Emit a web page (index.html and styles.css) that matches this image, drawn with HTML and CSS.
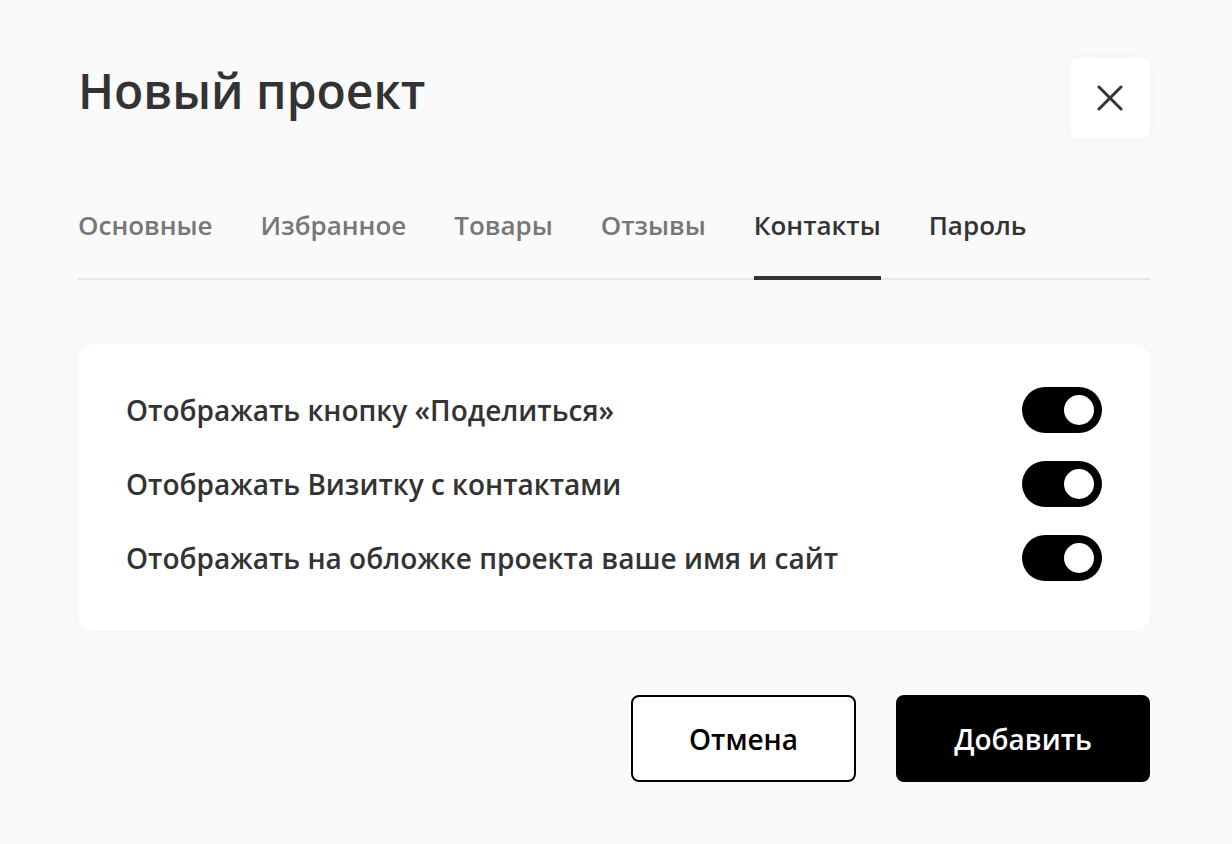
FILE: index.html
```html
<!DOCTYPE html>
<html lang="ru">
<head>
<meta charset="utf-8">
<title>Новый проект</title>
<link rel="stylesheet" href="styles.css">
</head>
<body>
<div class="modal">
  <header class="head">
    <h1 class="title">Новый проект</h1>
    <button class="close" aria-label="Закрыть">
      <svg width="26" height="26" viewBox="0 0 26 26"><path d="M2 2L24 24M24 2L2 24" stroke="#333" stroke-width="3" stroke-linecap="round"/></svg>
    </button>
  </header>
  <nav class="tabs">
    <span class="tab">Основные</span>
    <span class="tab">Избранное</span>
    <span class="tab">Товары</span>
    <span class="tab">Отзывы</span>
    <span class="tab active">Контакты</span>
    <span class="tab dark">Пароль</span>
  </nav>
  <section class="card">
    <div class="row"><span class="label">Отображать кнопку «Поделиться»</span><span class="toggle"><span class="knob"></span></span></div>
    <div class="row"><span class="label">Отображать Визитку с контактами</span><span class="toggle"><span class="knob"></span></span></div>
    <div class="row"><span class="label">Отображать на обложке проекта ваше имя и сайт</span><span class="toggle"><span class="knob"></span></span></div>
  </section>
  <footer class="actions">
    <button class="btn btn-outline">Отмена</button>
    <button class="btn btn-solid">Добавить</button>
  </footer>
</div>
</body>
</html>
```
FILE: styles.css
```css
* { box-sizing: border-box; }
html, body { margin: 0; padding: 0; }
body {
  background: #fafafa;
  font-family: "Open Sans", "Noto Sans", sans-serif;
  color: #333;
  width: 1232px;
  height: 844px;
  overflow: hidden;
}
.modal {
  padding: 58px 82px 0 78px;
}
.head {
  display: flex;
  justify-content: space-between;
  align-items: flex-start;
}
.title {
  margin: 0;
  font-size: 48px;
  font-weight: 600;
  line-height: 66px;
  color: #333;
}
.close {
  width: 80px;
  height: 80px;
  border: none;
  background: #fff;
  border-radius: 8px;
  box-shadow: 0 0 12px rgba(0,0,0,0.04);
  display: flex;
  align-items: center;
  justify-content: center;
  padding: 0;
}
.tabs {
  margin-top: 69px;
  display: flex;
  gap: 48px;
  border-bottom: 2px solid #e6e6e6;
}
.tab {
  font-size: 26px;
  font-weight: 600;
  color: #777;
  line-height: 36px;
  padding-bottom: 33px;
  margin-bottom: -2px;
  border-bottom: 4px solid transparent;
}
.tab.active { color: #333; border-bottom-color: #333; }
.tab.dark { color: #333; }
.card {
  margin-top: 64px;
  background: #fff;
  border-radius: 16px;
  padding: 43px 48px 50px 48px;
  display: flex;
  flex-direction: column;
  gap: 28px;
  box-shadow: 0 0 20px rgba(0,0,0,0.025);
}
.row {
  display: flex;
  align-items: center;
  justify-content: space-between;
  height: 46px;
}
.label {
  font-size: 28px;
  font-weight: 600;
  color: #333;
}
.toggle {
  width: 80px;
  height: 46px;
  border-radius: 23px;
  background: #000;
  display: flex;
  align-items: center;
  justify-content: flex-end;
  padding-right: 8px;
}
.knob {
  width: 30px;
  height: 30px;
  border-radius: 50%;
  background: #fff;
}
.actions {
  margin-top: 64px;
  display: flex;
  justify-content: flex-end;
  gap: 40px;
}
.btn {
  height: 87px;
  border-radius: 8px;
  font-family: "Open Sans", "Noto Sans", sans-serif;
  font-size: 28px;
  font-weight: 600;
  cursor: pointer;
}
.btn-outline {
  width: 225px;
  background: #fff;
  border: 2px solid #000;
  color: #000;
}
.btn-solid {
  width: 254px;
  background: #000;
  border: none;
  color: #fff;
}
```
